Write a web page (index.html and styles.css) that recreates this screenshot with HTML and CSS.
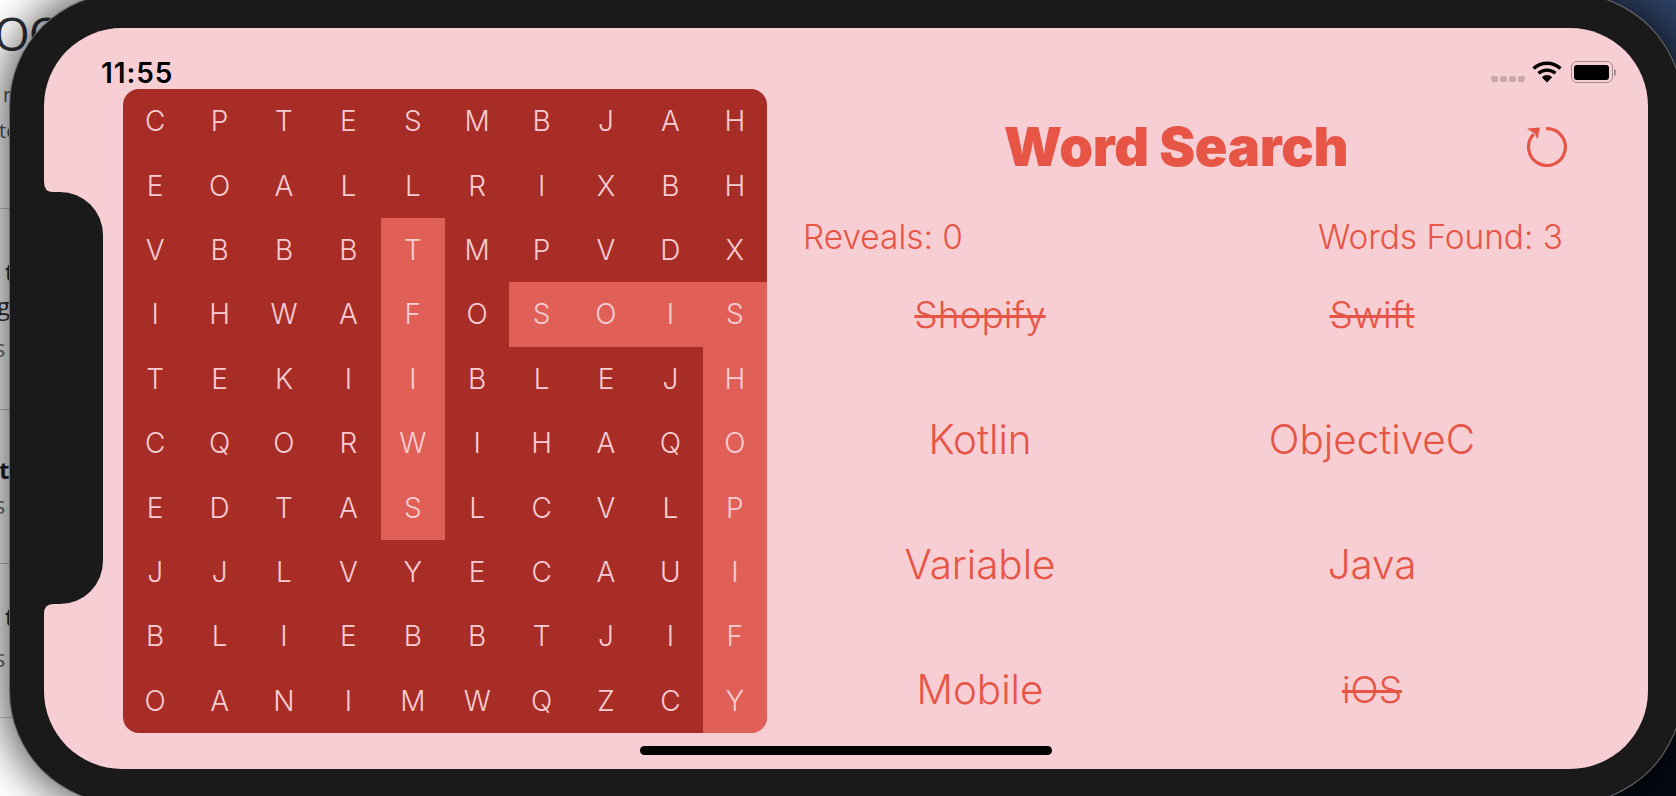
FILE: index.html
```html
<!DOCTYPE html>
<html lang="en">
<head>
  <meta charset="UTF-8" />
  <title>Word Search</title>
  <link rel="stylesheet" href="styles.css">
</head>
<body>
  <!-- browser window behind the simulator -->
  <div class="behind">
    <div class="behind-row row-a">
      <div class="big">OO</div>
      <div class="line line-n">n</div>
      <div class="line line-to">to</div>
    </div>
    <div class="behind-row row-b">
      <div class="line line-t">t</div>
      <div class="line line-g">g</div>
      <div class="line line-s">s</div>
    </div>
    <div class="behind-row row-c">
      <div class="line line-t2">t</div>
      <div class="line line-s2">s</div>
    </div>
    <div class="behind-row row-d">
      <div class="line line-t3">t</div>
      <div class="line line-s3">s</div>
    </div>
  </div>

  <div class="device">
    <div class="screen">
      <svg class="notch" width="60" height="440" viewBox="0 0 60 440">
        <path d="M0 0 Q0 10 9 10 H16 A43 43 0 0 1 59 53 V379 A43 43 0 0 1 16 422 H9 Q0 422 0 432 Z" fill="#1a1a1a"/>
      </svg>

      <div class="status-time">11:55</div>
      <div class="status-icons">
        <div class="signal"><i></i><i></i><i></i><i></i></div>
        <svg class="wifi" width="30" height="22" viewBox="0 0 30 22">
          <path d="M1.5 7.5 A20 20 0 0 1 28.5 7.5" fill="none" stroke="#000" stroke-width="3.4"/>
          <path d="M6.5 12.3 A13 13 0 0 1 23.5 12.3" fill="none" stroke="#000" stroke-width="3.4"/>
          <path d="M15 21.5 L9.8 16.2 A7.5 7.5 0 0 1 20.2 16.2 Z" fill="#000"/>
        </svg>
        <div class="battery"><b></b></div>
        <div class="battery-cap"></div>
      </div>

      <div class="board">
        <span>C</span><span>P</span><span>T</span><span>E</span><span>S</span><span>M</span><span>B</span><span>J</span><span>A</span><span>H</span>
        <span>E</span><span>O</span><span>A</span><span>L</span><span>L</span><span>R</span><span>I</span><span>X</span><span>B</span><span>H</span>
        <span>V</span><span>B</span><span>B</span><span>B</span><span class="hit">T</span><span>M</span><span>P</span><span>V</span><span>D</span><span>X</span>
        <span>I</span><span>H</span><span>W</span><span>A</span><span class="hit">F</span><span>O</span><span class="hit">S</span><span class="hit">O</span><span class="hit">I</span><span class="hit">S</span>
        <span>T</span><span>E</span><span>K</span><span>I</span><span class="hit">I</span><span>B</span><span>L</span><span>E</span><span>J</span><span class="hit">H</span>
        <span>C</span><span>Q</span><span>O</span><span>R</span><span class="hit">W</span><span>I</span><span>H</span><span>A</span><span>Q</span><span class="hit">O</span>
        <span>E</span><span>D</span><span>T</span><span>A</span><span class="hit">S</span><span>L</span><span>C</span><span>V</span><span>L</span><span class="hit">P</span>
        <span>J</span><span>J</span><span>L</span><span>V</span><span>Y</span><span>E</span><span>C</span><span>A</span><span>U</span><span class="hit">I</span>
        <span>B</span><span>L</span><span>I</span><span>E</span><span>B</span><span>B</span><span>T</span><span>J</span><span>I</span><span class="hit">F</span>
        <span>O</span><span>A</span><span>N</span><span>I</span><span>M</span><span>W</span><span>Q</span><span>Z</span><span>C</span><span class="hit">Y</span>
      </div>

      <div class="panel">
        <div class="header">
          <span></span>
          <h1>Word Search</h1>
          <svg class="reset" width="40" height="40" viewBox="0 0 40 40">
            <path d="M19 1.7 A18.4 18.4 0 1 1 6.8 7.2" fill="none" stroke="#e65546" stroke-width="3.2"/>
            <path d="M0 1.6 L13 0.4 L10.4 12.6 L8 6.8 Z" fill="#e65546"/>
          </svg>
        </div>
        <div class="stats">
          <span>Reveals: 0</span>
          <span>Words Found: 3</span>
        </div>
        <div class="words">
          <div class="word found">Shopify</div>
          <div class="word found">Swift</div>
          <div class="word">Kotlin</div>
          <div class="word">ObjectiveC</div>
          <div class="word">Variable</div>
          <div class="word">Java</div>
          <div class="word">Mobile</div>
          <div class="word found">iOS</div>
        </div>
      </div>

      <div class="home-bar"></div>
    </div>
  </div>
</body>
</html>
```

FILE: styles.css
```css
html, body { margin: 0; height: 100%; }
body {
  position: relative;
  width: 1676px;
  height: 796px;
  overflow: hidden;
  font-family: Inter, "Liberation Sans", sans-serif;
  background: linear-gradient(180deg, #2f4468 0%, #17233f 40%, #050814 100%);
}

/* window behind the phone */
.behind {
  position: absolute;
  left: 0;
  top: 0;
  width: 320px;
  height: 796px;
  background: #fff;
  font-family: "Open Sans", sans-serif;
  color: #4b515c;
}
.behind-row { position: relative; border-bottom: 1px solid #c4c4c4; }
.row-a { height: 208px; }
.row-b { height: 200px; }
.row-c { height: 153px; }
.row-d { height: 153px; }
.big { position: absolute; left: -6px; top: 2px; font-size: 46px; color: #2c3038; line-height: 62px; letter-spacing: -1px; }
.line { position: absolute; font-size: 24px; line-height: 30px; }
.line-n { left: 3px; top: 80px; font-size: 20px; }
.line-to { left: -1px; top: 116px; font-size: 20px; }
.line-t { left: 5px; top: 48px; color: #22252b; font-weight: 600; }
.line-g { left: -3px; top: 82px; color: #2c3038; }
.line-s { left: -6px; top: 124px; color: #6a7078; }
.line-t2 { left: -1px; top: 45px; color: #1c1e22; font-weight: 700; }
.line-s2 { left: -6px; top: 80px; color: #6a7078; }
.line-t3 { left: 5px; top: 38px; color: #22252b; font-weight: 600; }
.line-s3 { left: -6px; top: 79px; color: #6a7078; }

/* simulator */
.device {
  position: absolute;
  left: 10px;
  top: -6px;
  width: 1672px;
  height: 809px;
  box-sizing: border-box;
  padding: 34px;
  background: #1a1a1a;
  border-radius: 112px;
  box-shadow: 0 0 0 1px #6d6d6d, 0 0 40px 10px rgba(0, 0, 0, 0.6);
}
.screen {
  position: relative;
  display: flex;
  align-items: flex-start;
  height: 741px;
  box-sizing: border-box;
  padding: 61px 0 0 79px;
  background: #f7ced3;
  border-radius: 78px;
}
.notch { position: absolute; left: 0; top: 154px; }

.status-time {
  position: absolute;
  left: 57px;
  top: 29px;
  font-size: 28px;
  line-height: 32px;
  font-weight: 600;
  letter-spacing: 0.9px;
  color: #000;
}
.status-icons {
  position: absolute;
  left: 1447px;
  top: 33px;
  display: flex;
  align-items: center;
}
.signal { display: flex; gap: 2.5px; margin: 14px 7px 0 0; }
.signal i { width: 6.5px; height: 6.5px; border-radius: 2px; background: #c9a6ab; }
.wifi { display: block; margin-right: 9px; }
.battery {
  box-sizing: border-box;
  width: 42px;
  height: 22px;
  padding: 2.5px;
  border: 1.5px solid #a58a8e;
  border-radius: 6px;
}
.battery b { display: block; height: 100%; background: #000; border-radius: 3px; }
.battery-cap { width: 2.5px; height: 7px; margin-left: 1px; background: #a58a8e; border-radius: 0 2px 2px 0; }

/* letters */
.board {
  display: grid;
  grid-template-columns: repeat(10, 1fr);
  grid-template-rows: repeat(10, 1fr);
  flex: none;
  width: 644px;
  height: 644px;
  background: #a82d27;
  border-radius: 16px;
  overflow: hidden;
  color: #f7ced3;
  font-size: 28px;
  font-weight: 350;
}
.board span { display: flex; align-items: center; justify-content: center; }
.board .hit { background: #e06058; }

.panel {
  flex: none;
  box-sizing: border-box;
  width: 784px;
  margin: 28px 0 0 17px;
  color: #e65546;
}
.header {
  display: grid;
  grid-template-columns: 1fr auto 1fr;
  align-items: center;
  height: 60px;
}
.header h1 {
  margin: 0;
  font-size: 54px;
  line-height: 60px;
  font-weight: 900;
  letter-spacing: -0.3px;
}
.reset { justify-self: end; margin-right: 1px; }
.stats {
  display: flex;
  justify-content: space-between;
  height: 40px;
  margin-top: 40px;
  padding: 0 5px 0 19px;
  font-size: 33.4px;
  line-height: 40px;
  font-weight: 350;
}
.words {
  display: grid;
  grid-template-columns: 1fr 1fr;
  grid-auto-rows: 114px;
  row-gap: 11.3px;
}
.word {
  display: flex;
  align-items: center;
  justify-content: center;
  font-size: 40.4px;
  font-weight: 350;
}
.word.found {
  font-size: 37px;
  text-decoration: line-through;
  text-decoration-thickness: 3px;
}

.home-bar {
  position: absolute;
  left: 596px;
  top: 718px;
  width: 412px;
  height: 9px;
  border-radius: 5px;
  background: #000;
}
```
